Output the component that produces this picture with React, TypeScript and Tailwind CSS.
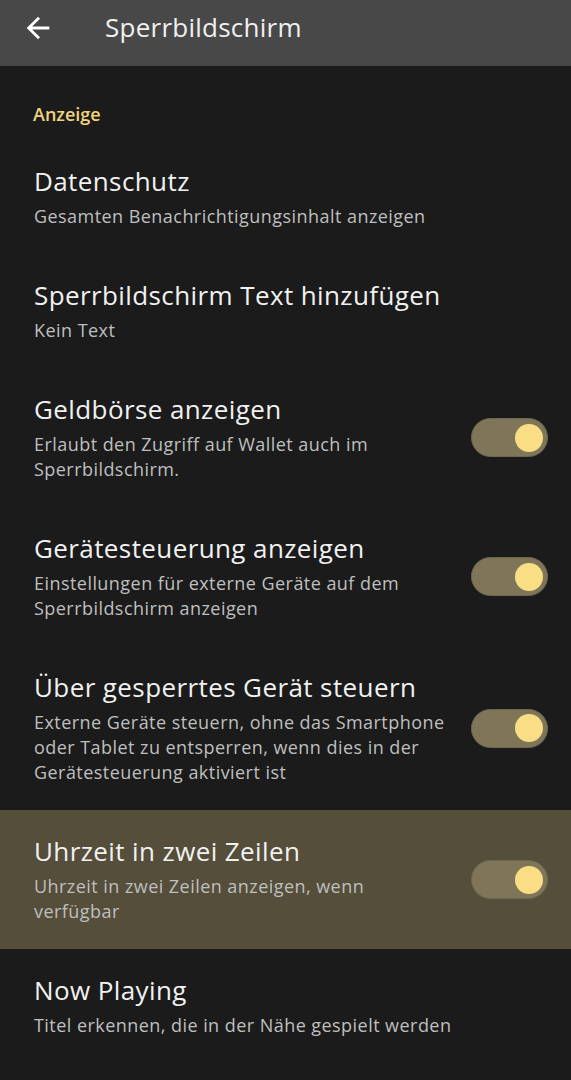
const ROWS = [
  { title: 'Datenschutz', sub: 'Gesamten Benachrichtigungsinhalt anzeigen' },
  { title: 'Sperrbildschirm Text hinzufügen', sub: 'Kein Text' },
  {
    title: 'Geldbörse anzeigen',
    sub: 'Erlaubt den Zugriff auf Wallet auch im Sperrbildschirm.',
    toggle: true,
  },
  {
    title: 'Gerätesteuerung anzeigen',
    sub: 'Einstellungen für externe Geräte auf dem Sperrbildschirm anzeigen',
    toggle: true,
  },
  {
    title: 'Über gesperrtes Gerät steuern',
    sub: 'Externe Geräte steuern, ohne das Smartphone oder Tablet zu entsperren, wenn dies in der Gerätesteuerung aktiviert ist',
    toggle: true,
  },
  {
    title: 'Uhrzeit in zwei Zeilen',
    sub: 'Uhrzeit in zwei Zeilen anzeigen, wenn verfügbar',
    toggle: true,
    active: true,
  },
  { title: 'Now Playing', sub: 'Titel erkennen, die in der Nähe gespielt werden' },
];

function Toggle() {
  return (
    <div className="w-[77px] h-[39px] shrink-0 rounded-full bg-[#7f7659] border border-[#6e6750] flex items-center justify-end pr-[4px]">
      <div className="w-[28px] h-[28px] rounded-full bg-[#f9de85]" />
    </div>
  );
}

export default function App() {
  return (
    <div
      className="w-[571px] h-[1080px] overflow-hidden bg-[#1b1b1b] text-[#f0f0f0]"
      style={{ fontFamily: '"Open Sans", Roboto, sans-serif' }}
    >
      <header className="h-[66px] bg-[#484848] flex items-center">
        {/* back arrow */}
        <svg
          className="ml-[21px] mb-[10px] shrink-0"
          width="34"
          height="34"
          viewBox="0 0 24 24"
          fill="#ffffff"
        >
          <path d="M20 11H7.83l5.59-5.59L12 4l-8 8 8 8 1.41-1.41L7.83 13H20v-2z" />
        </svg>
        <h1 className="ml-[50px] mb-[13px] text-[26px] leading-[34px] tracking-[0.25px] text-[#f0f0f0]">
          Sperrbildschirm
        </h1>
      </header>

      <div className="pl-[33px] pt-[34px] pb-[12px] h-[74px]">
        <span className="block text-[18px] leading-[28px] font-semibold text-[#f1d37e]">
          Anzeige
        </span>
      </div>

      {ROWS.map((row) => (
        <div
          key={row.title}
          className={`${
            row.active ? 'bg-[#554e3a]' : ''
          } flex items-center pl-[34px] pr-[23px] pt-[25px] pb-[25px] gap-[24px]`}
        >
          <div className="flex-1 flex flex-col gap-[6px]">
            <span className="text-[26px] leading-[33px] tracking-[0.4px] text-[#f1f1f1]">
              {row.title}
            </span>
            <span className="text-[18px] leading-[25px] tracking-[0.45px] text-[#bfbfbf]">
              {row.sub}
            </span>
          </div>
          {row.toggle && <Toggle />}
        </div>
      ))}
    </div>
  );
}
